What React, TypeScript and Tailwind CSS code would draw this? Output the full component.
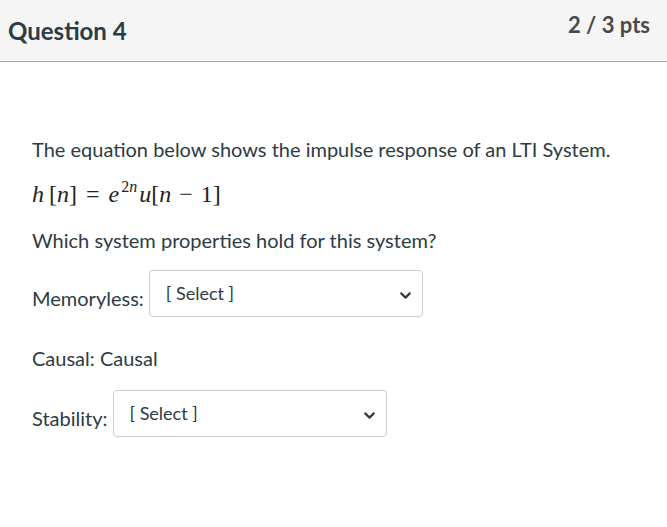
import { ChevronDown } from "lucide-react";

function SelectBox({ width }: { width: string }) {
  return (
    <div
      className={`${width} h-[47px] border border-[#c7cdd1] rounded-[4px] bg-white flex items-start justify-between pl-4 pr-[8px] pt-[11px]`}
    >
      <span className="text-[18px] leading-[22px] text-[#2d3b45]">[ Select ]</span>
      <ChevronDown size={17} strokeWidth={3} className="text-[#2d3b45] mt-[5px]" />
    </div>
  );
}

function Row({ label, width }: { label: string; width: string }) {
  return (
    <div className="flex items-center gap-[5px]">
      <span className="text-[20px] leading-[30px] mt-[9px]">{label}</span>
      <SelectBox width={width} />
    </div>
  );
}

export default function App() {
  return (
    <div className="w-[667px] h-[527px] bg-white text-[#2d3b45] font-['Lato',sans-serif] overflow-hidden">
      <div className="h-[62px] bg-[#f5f5f5] border-b border-[#a6a6a6] flex items-start justify-between pl-2 pr-[17px]">
        <h2 className="text-[24px] font-bold leading-[30px] mt-[16px]">Question 4</h2>
        <span className="text-[22px] font-bold leading-[26px] mt-[12px] text-[#4a4a4a]">2 / 3 pts</span>
      </div>

      <div className="pl-8 pt-[72px] flex flex-col">
        <p className="text-[20px] leading-[30px]">The equation below shows the impulse response of an LTI System.</p>

        <p className="mt-[15px] text-[24px] leading-[30px] font-['Liberation_Serif',serif] text-[#222] whitespace-nowrap">
          <i>h</i>
          <span className="ml-[5px]">[</span>
          <i>n</i>]<span className="mx-[9px]">=</span>
          <i>e</i>
          <sup className="text-[16px] relative -top-[10px] ml-[2px] mr-[2px]">
            2<i>n</i>
          </sup>
          <i>u</i>[<i>n</i>
          <span className="mx-[8px]">−</span>1]
        </p>

        <p className="mt-[16px] text-[20px] leading-[30px]">Which system properties hold for this system?</p>

        <div className="mt-[15px]">
          <Row label="Memoryless:" width="w-[274px]" />
        </div>

        <p className="mt-[26px] text-[20px] leading-[30px]">Causal: Causal</p>

        <div className="mt-[17px]">
          <Row label="Stability:" width="w-[274px]" />
        </div>
      </div>
    </div>
  );
}
